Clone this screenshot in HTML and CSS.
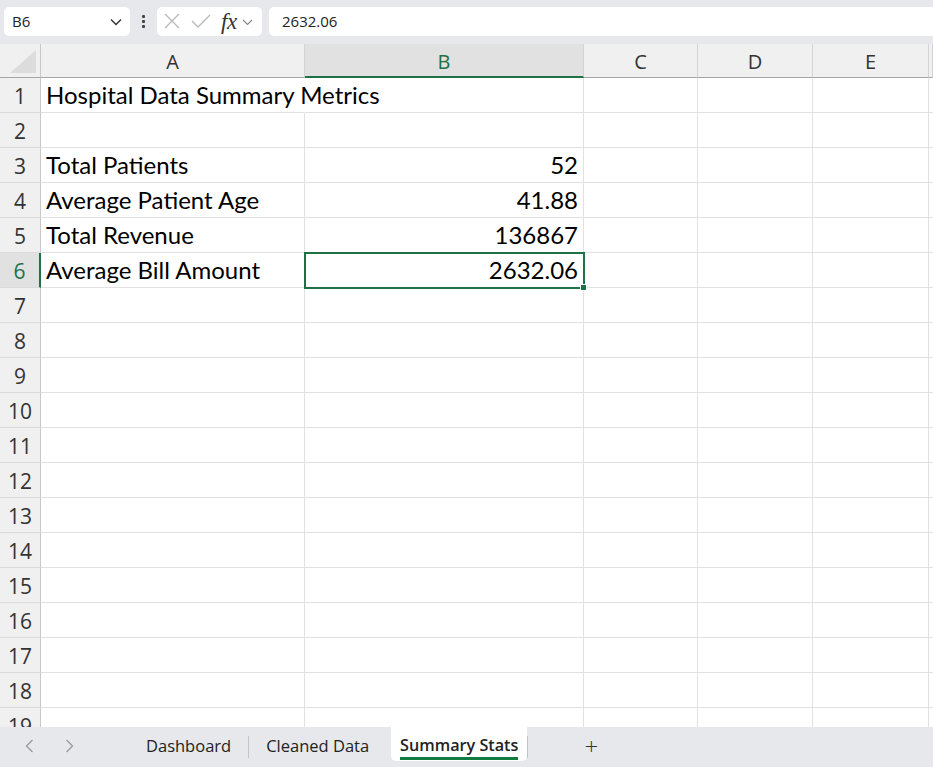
FILE: index.html
```html
<!DOCTYPE html>
<html>
<head>
<meta charset="utf-8">
<link rel="stylesheet" href="styles.css">
</head>
<body>
<div class="app">
  <div class="toolbar">
    <div class="namebox">
      <span>B6</span>
      <svg class="chev" width="12" height="8" viewBox="0 0 12 8"><path d="M1 1.5 L6 6.5 L11 1.5" fill="none" stroke="#333" stroke-width="1.4"/></svg>
    </div>
    <div class="dots"><i></i><i></i><i></i></div>
    <div class="fxgroup">
      <svg width="20" height="20" viewBox="0 0 20 20"><path d="M3 3 L17 17 M17 3 L3 17" stroke="#b8b8b8" stroke-width="1.3" fill="none"/></svg>
      <svg width="22" height="20" viewBox="0 0 22 20"><path d="M2 10 L8 16 L20 4" stroke="#b8b8b8" stroke-width="1.3" fill="none"/></svg>
      <span class="fx">fx</span>
      <svg class="chev2" width="11" height="7" viewBox="0 0 11 7"><path d="M1 1 L5.5 5.5 L10 1" fill="none" stroke="#888" stroke-width="1.2"/></svg>
    </div>
    <div class="formula">2632.06</div>
  </div>

  <div class="sheet">
    <div class="corner"><div class="tri"></div></div>
    <div class="ch">A</div><div class="ch sel-col">B</div><div class="ch">C</div><div class="ch">D</div><div class="ch">E</div><div class="ch last"></div>

    <div class="rh">1</div><div class="c ovf">Hospital Data Summary Metrics</div><div class="c"></div><div class="c"></div><div class="c"></div><div class="c"></div><div class="c"></div>
    <div class="rh">2</div><div class="c"></div><div class="c"></div><div class="c"></div><div class="c"></div><div class="c"></div><div class="c"></div>
    <div class="rh">3</div><div class="c">Total Patients</div><div class="c num">52</div><div class="c"></div><div class="c"></div><div class="c"></div><div class="c"></div>
    <div class="rh">4</div><div class="c">Average Patient Age</div><div class="c num">41.88</div><div class="c"></div><div class="c"></div><div class="c"></div><div class="c"></div>
    <div class="rh">5</div><div class="c">Total Revenue</div><div class="c num">136867</div><div class="c"></div><div class="c"></div><div class="c"></div><div class="c"></div>
    <div class="rh sel-row">6</div><div class="c">Average Bill Amount</div><div class="c num sel">2632.06<span class="handle"></span></div><div class="c"></div><div class="c"></div><div class="c"></div><div class="c"></div>
    <div class="rh">7</div><div class="c"></div><div class="c"></div><div class="c"></div><div class="c"></div><div class="c"></div><div class="c"></div>
    <div class="rh">8</div><div class="c"></div><div class="c"></div><div class="c"></div><div class="c"></div><div class="c"></div><div class="c"></div>
    <div class="rh">9</div><div class="c"></div><div class="c"></div><div class="c"></div><div class="c"></div><div class="c"></div><div class="c"></div>
    <div class="rh">10</div><div class="c"></div><div class="c"></div><div class="c"></div><div class="c"></div><div class="c"></div><div class="c"></div>
    <div class="rh">11</div><div class="c"></div><div class="c"></div><div class="c"></div><div class="c"></div><div class="c"></div><div class="c"></div>
    <div class="rh">12</div><div class="c"></div><div class="c"></div><div class="c"></div><div class="c"></div><div class="c"></div><div class="c"></div>
    <div class="rh">13</div><div class="c"></div><div class="c"></div><div class="c"></div><div class="c"></div><div class="c"></div><div class="c"></div>
    <div class="rh">14</div><div class="c"></div><div class="c"></div><div class="c"></div><div class="c"></div><div class="c"></div><div class="c"></div>
    <div class="rh">15</div><div class="c"></div><div class="c"></div><div class="c"></div><div class="c"></div><div class="c"></div><div class="c"></div>
    <div class="rh">16</div><div class="c"></div><div class="c"></div><div class="c"></div><div class="c"></div><div class="c"></div><div class="c"></div>
    <div class="rh">17</div><div class="c"></div><div class="c"></div><div class="c"></div><div class="c"></div><div class="c"></div><div class="c"></div>
    <div class="rh">18</div><div class="c"></div><div class="c"></div><div class="c"></div><div class="c"></div><div class="c"></div><div class="c"></div>
    <div class="rh">19</div><div class="c"></div><div class="c"></div><div class="c"></div><div class="c"></div><div class="c"></div><div class="c"></div>
  </div>

  <div class="tabbar">
    <div class="navs">
      <svg width="9" height="14" viewBox="0 0 9 14"><path d="M7.5 1 L1.5 7 L7.5 13" fill="none" stroke="#9a9a9a" stroke-width="1.3"/></svg>
      <svg width="9" height="14" viewBox="0 0 9 14"><path d="M1.5 1 L7.5 7 L1.5 13" fill="none" stroke="#9a9a9a" stroke-width="1.3"/></svg>
    </div>
    <div class="tab">Dashboard</div>
    <div class="sep"></div>
    <div class="tab">Cleaned Data</div>
    <div class="tab active"><span>Summary Stats</span></div>
    <div class="sep"></div>
    <div class="plus">+</div>
  </div>
</div>
</body>
</html>
```

FILE: styles.css
```css
* { box-sizing: border-box; }
html, body { margin: 0; padding: 0; }
body { width: 933px; height: 767px; overflow: hidden; background: #e6e8eb; font-family: "Open Sans", "Noto Sans", sans-serif; }
.app { display: flex; flex-direction: column; height: 767px; }

.toolbar { height: 44px; display: flex; align-items: center; padding: 0 0 2px 4px; gap: 0; background: #e6e8eb; }
.namebox { width: 126px; height: 29px; background: #fff; border-radius: 5px; display: flex; align-items: center; justify-content: space-between; padding: 0 8px 0 8px; font-size: 15px; color: #222; }
.namebox .chev { margin-top: 2px; }
.dots { width: 27px; display: flex; flex-direction: column; align-items: center; gap: 2px; }
.dots i { display: block; width: 3px; height: 3px; background: #444; border-radius: 1px; }
.fxgroup { width: 105px; height: 29px; background: #fff; border-radius: 5px; display: flex; align-items: center; padding-left: 5px; gap: 8px; }
.fx { font-family: "Liberation Serif", "DejaVu Serif", serif; font-style: italic; font-size: 23px; color: #333; margin-left: 1px; letter-spacing: -0.5px; line-height: 1; }
.chev2 { margin-left: -3px; margin-top: 2px; }
.formula { margin-left: 7px; flex: 1; height: 29px; background: #fff; border-radius: 5px 0 0 5px; display: flex; align-items: center; padding-left: 13px; font-size: 15px; color: #222; }

.sheet { height: 683px; overflow: hidden; background: #fff; display: grid; grid-template-columns: 41px 264px 279px 114px 115px 116px 4px; grid-template-rows: 34px; grid-auto-rows: 35px; }
.corner { background: #f0f0f0; border-right: 1px solid #c8c8c8; border-bottom: 1px solid #a6a6a6; position: relative; }
.tri { position: absolute; right: 4px; bottom: 4px; width: 0; height: 0; border-style: solid; border-width: 0 0 23px 26px; border-color: transparent transparent #dcdcdc transparent; }
.ch { background: #f0f0f0; border-right: 1px solid #d4d4d4; border-bottom: 1px solid #a6a6a6; display: flex; align-items: center; justify-content: center; font-size: 20px; color: #333; padding-top: 1px; }
.ch.sel-col { background: #e1e1e1; color: #1e7145; border-bottom: 2px solid #1e7145; padding-top: 2px; }
.rh { background: #f0f0f0; border-right: 1px solid #c8c8c8; border-bottom: 1px solid #dadada; display: flex; align-items: center; justify-content: center; font-size: 21px; color: #333; padding-top: 1px; }
.rh.sel-row { background: #e1e1e1; color: #1e7145; border-right: 2px solid #1e7145; }
.c { border-right: 1px solid #e1e1e1; border-bottom: 1px solid #e1e1e1; font-family: "Lato", "Noto Sans", sans-serif; font-size: 24px; color: #000; white-space: nowrap; display: flex; align-items: flex-end; padding: 0 5px 2px 5px; line-height: 30px; }
.c.ovf { border-right-color: transparent; overflow: visible; }
.c.num { justify-content: flex-end; }
.c.sel { position: relative; outline: 2px solid #1e7145; outline-offset: -1px; z-index: 2; }
.handle { position: absolute; right: -4px; bottom: -4px; width: 7px; height: 7px; background: #1e7145; border: 1px solid #fff; }

.tabbar { height: 40px; background: #e6e8eb; display: flex; align-items: flex-start; font-size: 16.5px; color: #222; }
.navs { width: 129px; height: 37px; display: flex; align-items: center; gap: 31px; padding-left: 25px; }
.tab { height: 37px; display: flex; align-items: center; padding: 0 17px; }
.sep { width: 1px; height: 22px; background: #c4c4c4; margin-top: 9px; }
.tab.active { background: #fff; border-radius: 0 0 5px 5px; margin-left: 5px; padding: 0 9px; height: 34px; font-weight: 600; font-size: 16.2px; }
.tab.active span { border-bottom: 3px solid #107c41; padding-bottom: 1px; margin-top: 6px; }
.plus { font-size: 24px; font-weight: 300; color: #333; margin-left: 56px; height: 37px; display: flex; align-items: center; }
```
